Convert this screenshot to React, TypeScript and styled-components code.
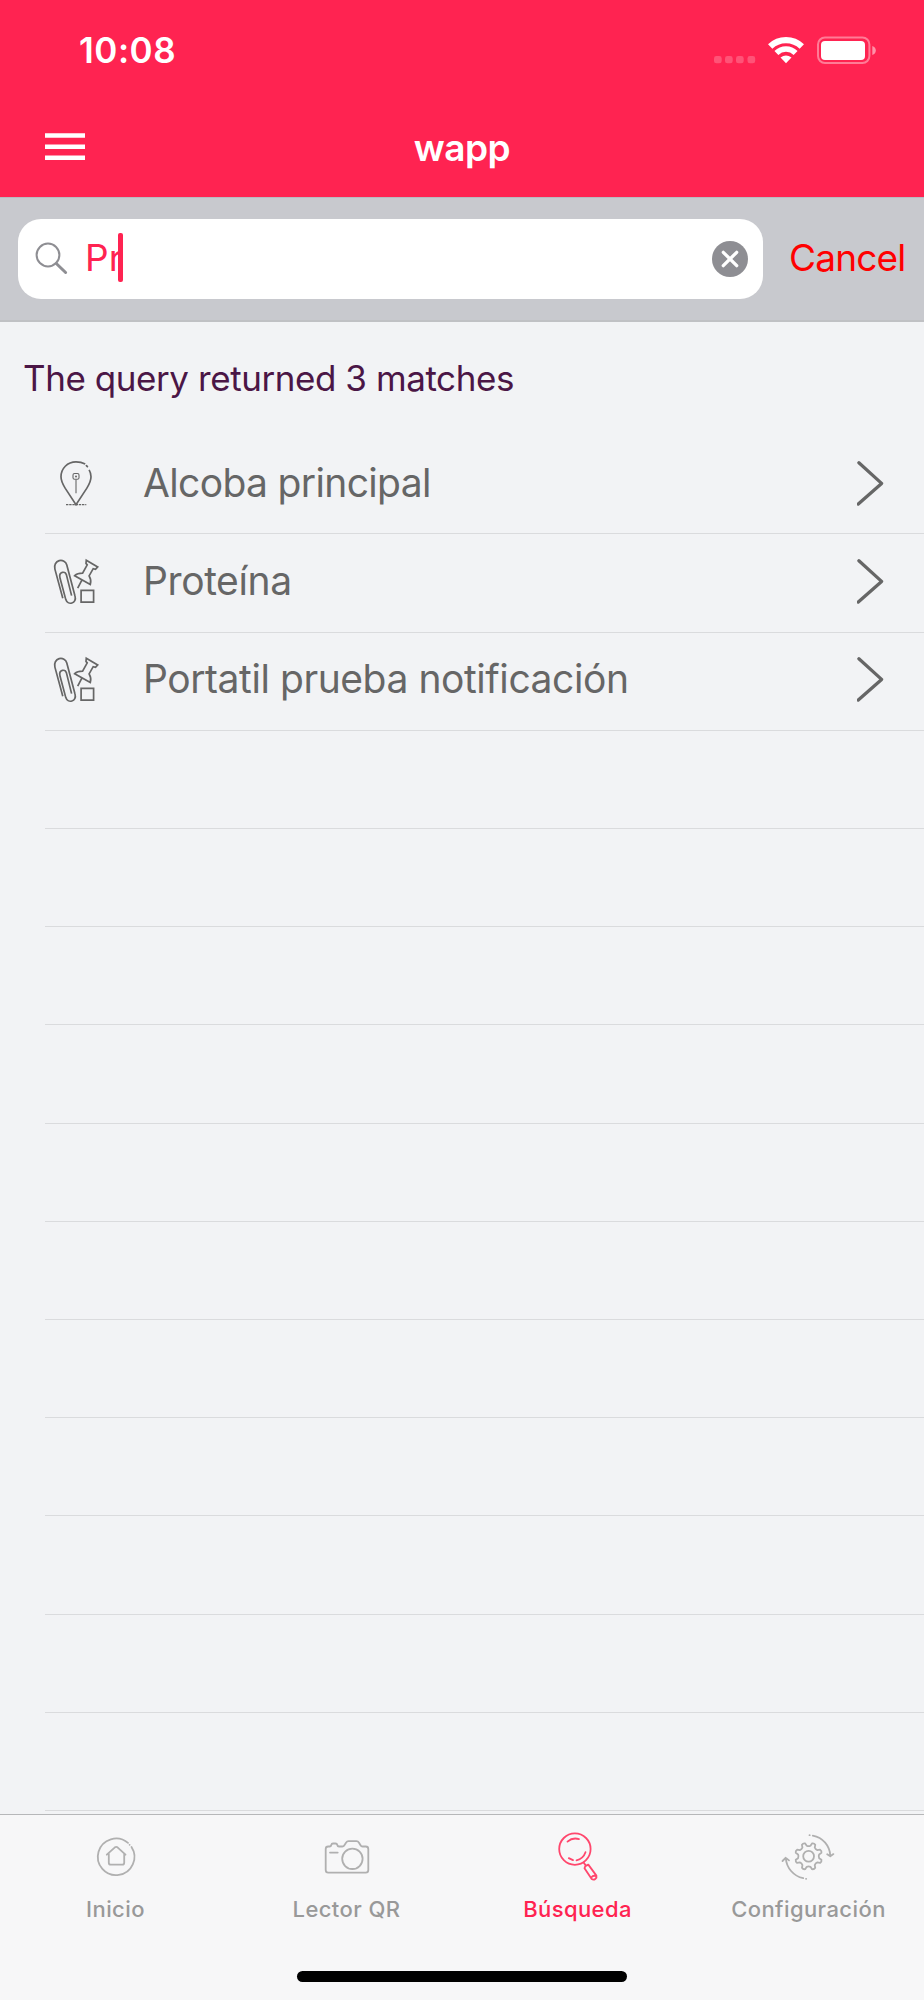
import React from 'react';
import styled, { createGlobalStyle } from 'styled-components';

const GlobalStyle = createGlobalStyle`
  * { box-sizing: border-box; }
  body { margin: 0; background: #f2f3f5; }
`;

const Screen = styled.div`
  display: flex;
  flex-direction: column;
  width: 924px;
  height: 2000px;
  overflow: hidden;
  background: #f2f3f5;
  font-family: Inter, 'Liberation Sans', sans-serif;
`;

const Label = styled.span<{ $size: number; $spacing?: number; $weight?: number; $color: string }>`
  font-size: ${(p) => p.$size}px;
  letter-spacing: ${(p) => p.$spacing ?? 0}px;
  font-weight: ${(p) => p.$weight ?? 400};
  color: ${(p) => p.$color};
  line-height: 48px;
  white-space: nowrap;
`;

const Header = styled.header`
  flex: none;
  height: 197px;
  background: #ff2351;
`;

const StatusBar = styled.div`
  display: flex;
  justify-content: space-between;
  height: 98px;
  padding: 26px 46px 0 79px;
`;

const StatusIcons = styled.svg`
  flex: none;
  width: 164px;
  height: 30px;
  margin-top: 9px;
`;

const NavBar = styled.div`
  display: grid;
  grid-template-columns: 200px 1fr 200px;
  height: 99px;
  padding-top: 26px;
  text-align: center;
`;

const MenuIcon = styled.svg`
  width: 40px;
  height: 28px;
  margin: 9px 0 0 45px;
`;

const SearchBar = styled.div`
  flex: none;
  display: flex;
  align-items: flex-start;
  height: 125px;
  padding: 21px 0 0 18px;
  background: #c8c9ce;
  border-top: 1px solid #b9bac0;
  border-bottom: 2px solid #c0c1c4;
`;

const Field = styled.div`
  display: flex;
  align-items: center;
  width: 745px;
  height: 80px;
  padding: 0 15px 0 17px;
  background: #fff;
  border-radius: 23px;
`;

const Query = styled.div`
  display: flex;
  flex: 1;
  align-items: center;
  padding: 0 0 3px 16px;
`;

const Caret = styled.i`
  width: 5px;
  height: 49px;
  margin-left: -5px;
  border-radius: 2px;
  background: #ff2351;
`;

const CancelButton = styled.div`
  padding: 15px 0 0 26px;
`;

const Summary = styled.div`
  flex: none;
  height: 114.3px;
  padding: 32px 0 0 23px;
`;

const List = styled.div`
  flex: none;
  height: 1377.7px;
  overflow: hidden;
`;

const Row = styled.div`
  position: relative;
  display: flex;
  align-items: center;
  height: 98.2px;
  padding: 0 39px 1.5px 40px;

  &::after {
    content: '';
    position: absolute;
    left: 45px;
    right: 0;
    bottom: 0;
    height: 1px;
    background: #dadbdd;
  }
`;

const RowIcon = styled.svg`
  flex: none;
  width: 70px;
  height: 70px;
  fill: none;
  stroke: #666;
  stroke-width: 1.7;
`;

const RowText = styled.div`
  flex: 1;
  padding: 0 0 4px 33px;
`;

const TabBar = styled.nav`
  flex: none;
  display: grid;
  grid-template-columns: repeat(4, 1fr);
  height: 140px;
  padding-top: 5px;
  background: #f7f7f8;
  border-top: 1px solid #b6b7b9;
`;

const Tab = styled.div`
  display: flex;
  flex-direction: column;
  align-items: center;
`;

const TabIcon = styled.svg<{ $active?: boolean }>`
  width: 80px;
  height: 70px;
  margin-bottom: -5px;
  fill: none;
  stroke: ${(p) => (p.$active ? '#ff476d' : '#b0b0b0')};
  stroke-width: 1.8;
  stroke-linecap: round;
  stroke-linejoin: round;
`;

const BottomInset = styled.footer`
  flex: none;
  display: flex;
  justify-content: center;
  height: 46px;
  padding-top: 17px;
  background: #f7f7f8;
`;

const HomeIndicator = styled.div`
  width: 330px;
  height: 11px;
  border-radius: 6px;
  background: #000;
`;

const Pin = () => (
  <RowIcon viewBox="0 0 70 70">
    <path d="M45.2 14.1C42 12.4 39 11.9 36 11.9 27.4 11.9 21 18.6 21 26.8 21 31.6 23 34.7 25.3 38.4L36 54.6 46.7 38.4C49 34.7 51 31.6 51 26.8 51 24.4 50.3 21.9 49.1 19.9" />
    <path d="M46.4 15.6l1 1" strokeLinecap="round" />
    <rect x="33" y="23.5" width="6" height="5.8" rx="1.6" strokeWidth="1.1" />
    <circle cx="36" cy="26.4" r="1" fill="#666" stroke="none" />
    <path d="M36 29.5V43.3" strokeWidth="1.1" />
    <path d="M26 54.6H46.3" strokeWidth="1.1" strokeDasharray="2.4 .8" />
  </RowIcon>
);

const Office = () => (
  <RowIcon viewBox="0 3.2 70 70">
    <path d="M22.8 53.4L14.9 24.3C13.8 20.3 15.9 16.9 19.2 15.8 22.5 14.9 25.9 16.8 26.8 20.2L35 51.2C36.1 55 34.4 57.6 31.9 58.2 29.2 59 26.6 57.5 25.8 54.8L20 33.2C19.2 30.2 20.3 28.2 22.3 27.6 24.4 27.1 26 28.5 26.5 30.3L31.6 50.8" />
    <path d="M46.3 15.4L57.7 22.1 55.5 24.5 53.2 23.9 49.1 31.1C50.7 33.7 51.3 36.6 50.3 39.7L34.7 30.9C37 28.6 39.8 28.3 42.6 28.3L47.2 20.1 46 18.6zM42 35L37.7 43.4" />
    <path d="M41.1 45.6H53.6V57.4H41.1z" />
  </RowIcon>
);

const Chevron = () => (
  <svg width="28" height="48" viewBox="0 0 28 48" fill="none" stroke="#666" strokeWidth="3.3" strokeLinecap="round" strokeLinejoin="round">
    <path d="M1.9 1.8L24.6 22.4 1.3 43.1" />
  </svg>
);

const HomeIcon = () => (
  <TabIcon viewBox="0 0 80 70">
    <path d="M55.5 26.9A18.3 18.3 0 1 1 52 22.9M53.6 24.8h.01" />
    <path d="M30.8 34.7L38.9 27.3Q40.2 26.3 41.5 27.3L49.5 34.7M32.8 33.5V42.7a2 2 0 0 0 2 2H46.2a2 2 0 0 0 2-2V33.5" />
  </TabIcon>
);

const CameraIcon = () => (
  <TabIcon viewBox="7 0 80 70">
    <path d="M29.6 26.5H28.2Q25.7 26.5 25.7 29V50Q25.7 52.7 28.2 52.7H65.8Q68.3 52.7 68.3 50V29Q68.3 26.5 65.8 26.5H62.5Q61.3 26.5 60.7 25.5L59 22.7Q58 21.2 56.5 21.2H48.5Q47 21.2 46 22.7L44.2 25.5Q43.6 26.5 42.4 26.5H39Q37.6 26.5 37.3 25 37 23.5 35.5 23.5H33Q31.5 23.5 31.3 25 31 26.5 29.6 26.5z" />
    <circle cx="52.4" cy="38.8" r="10.2" />
    <path d="M30 32.6H37.7" />
  </TabIcon>
);

const SearchIcon = () => (
  <TabIcon $active viewBox="-2 0 80 70">
    <circle cx="34.9" cy="29.1" r="15.7" />
    <path d="M27.5 21.6Q32.5 17.2 39 19.1M45.5 32.2Q43.3 38.6 36.5 40.3M28.8 38.1L33 40.1M43.5 42.4L45.6 45.2M44.5 48.2L45.3 46.1 48.3 44.6 56.4 55.6A3.1 3.1 0 0 1 51.7 59.1zM51.3 57.5C52.6 55.7 54.2 55.3 56.2 56.3" />
  </TabIcon>
);

const gear = Array.from({ length: 8 }, (_, i) => {
  const at = (r: number, deg: number) => {
    const a = ((i * 45 + deg) * Math.PI) / 180;
    return `${(43.6 + r * Math.cos(a)).toFixed(2)} ${(36.3 + r * Math.sin(a)).toFixed(2)}`;
  };
  return `${i ? 'L' : 'M'}${at(10.7, 10)}L${at(13.3, 15)}Q${at(14.4, 22.5)} ${at(13.3, 30)}L${at(10.7, 35)}Q${at(9.7, 45)} ${at(10.7, 55)}`;
}).join('') + 'z';

const SettingsIcon = () => (
  <TabIcon viewBox="4 0 80 70">
    <path d={gear} />
    <circle cx="43.6" cy="36.3" r="5.4" />
    <path d="M47.8 15.6A21.3 21.3 0 0 1 65.3 36M62.2 34.2L65.3 36.3 68.4 34.1M44.5 15.2h.2" />
    <path d="M38.2 58.2A22 22 0 0 1 20.8 38M17.5 41L20.6 37.8 24 40.4M41 58.8h.2" />
  </TabIcon>
);

const results = [
  { text: 'Alcoba principal', icon: <Pin />, spacing: -0.65 },
  { text: 'Proteína', icon: <Office />, spacing: -0.4 },
  { text: 'Portatil prueba notificación', icon: <Office />, spacing: -0.43 },
];

const tabs = [
  { text: 'Inicio', icon: <HomeIcon /> },
  { text: 'Lector QR', icon: <CameraIcon /> },
  { text: 'Búsqueda', icon: <SearchIcon />, active: true },
  { text: 'Configuración', icon: <SettingsIcon /> },
];

export default function App() {
  return (
    <Screen>
      <GlobalStyle />
      <Header>
        <StatusBar>
          <Label $size={35} $spacing={0.5} $weight={600} $color="#fff">10:08</Label>
          <StatusIcons viewBox="714 35 164 30" fill="none">
            {[714, 725, 736, 747.5].map((x) => (
              <rect key={x} x={x} y="56" width="7.7" height="7.3" rx="2.4" fill="#fff" fillOpacity=".22" />
            ))}
            <path d="M770.2 46.5A22.7 22.7 0 0 1 801.8 46.5" stroke="#fff" strokeWidth="6.2" />
            <path d="M776.4 52.9A13.8 13.8 0 0 1 795.6 52.9" stroke="#fff" strokeWidth="5.6" />
            <path d="M786 63.2L780.5 57.6Q786 53.2 791.5 57.6z" fill="#fff" />
            <rect x="818" y="37.5" width="51.4" height="25.6" rx="7" stroke="#fff" strokeOpacity=".4" strokeWidth="2" />
            <rect x="821" y="41" width="44" height="19" rx="4" fill="#fff" />
            <path d="M872.3 46Q875.8 47.2 875.8 50.5T872.3 55z" fill="#fff" fillOpacity=".5" />
          </StatusIcons>
        </StatusBar>
        <NavBar>
          <MenuIcon viewBox="0 0 40 28" fill="#fff">
            <path d="M0 .2H40V4.8H0zM0 11.4H40V16H0zM0 22.4H40V27H0z" />
          </MenuIcon>
          <Label $size={37} $spacing={-0.5} $weight={600} $color="#fff">wapp</Label>
        </NavBar>
      </Header>
      <SearchBar>
        <Field>
          <svg width="34" height="34" viewBox="35 242 34 34" fill="none" stroke="#8e8e93">
            <circle cx="48" cy="255" r="11.4" strokeWidth="2" />
            <path d="M56.3 263.5L65.6 272.5" strokeWidth="3" strokeLinecap="round" />
          </svg>
          <Query>
            <Label $size={37} $color="#ff2351">Pr</Label>
            <Caret />
          </Query>
          <svg width="36" height="36" viewBox="0 0 36 36">
            <circle cx="18" cy="18" r="18" fill="#8e8e93" />
            <path d="M11.3 11.3L24.7 24.7M24.7 11.3L11.3 24.7" stroke="#fff" strokeWidth="3.3" strokeLinecap="round" />
          </svg>
        </Field>
        <CancelButton>
          <Label $size={37} $spacing={-0.8} $color="#ff0000">Cancel</Label>
        </CancelButton>
      </SearchBar>
      <Summary>
        <Label $size={35} $spacing={-0.43} $color="#4b1646">The query returned 3 matches</Label>
      </Summary>
      <List>
        {results.map((r) => (
          <Row key={r.text}>
            {r.icon}
            <RowText>
              <Label $size={39} $spacing={r.spacing} $color="#666">{r.text}</Label>
            </RowText>
            <Chevron />
          </Row>
        ))}
        {Array.from({ length: 12 }, (_, i) => (
          <Row key={i} />
        ))}
      </List>
      <TabBar>
        {tabs.map((t) => (
          <Tab key={t.text}>
            {t.icon}
            <Label $size={22} $spacing={0.42} $weight={500} $color={t.active ? '#ff2351' : '#999'}>{t.text}</Label>
          </Tab>
        ))}
      </TabBar>
      <BottomInset>
        <HomeIndicator />
      </BottomInset>
    </Screen>
  );
}
